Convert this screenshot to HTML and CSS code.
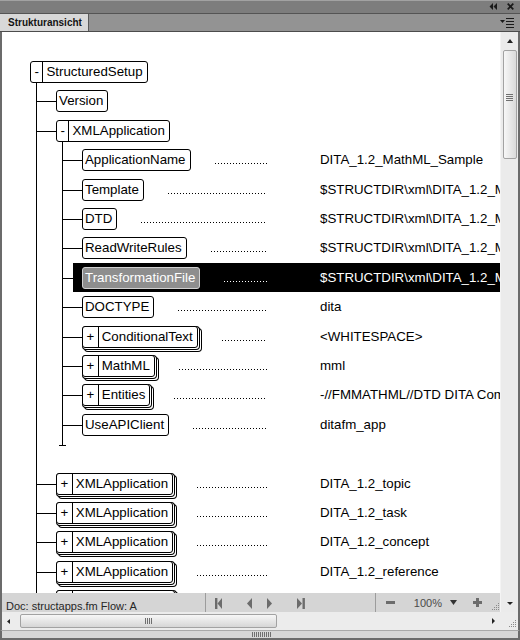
FILE: index.html
```html
<!DOCTYPE html>
<html>
<head>
<meta charset="utf-8">
<link rel="stylesheet" href="styles.css">
</head>
<body>
<div class="panel">
  <div class="titlebar">
    <svg class="collapse" width="8" height="7" viewBox="0 0 8 7"><path d="M4 0L0.5 3.5L4 7ZM8 0L4.5 3.5L8 7Z" fill="#1a1a1a"/></svg>
    <svg class="close" width="7" height="7" viewBox="0 0 7 7"><path d="M0.7 0.7L6.3 6.3M6.3 0.7L0.7 6.3" stroke="#1a1a1a" stroke-width="1.7"/></svg>
  </div>
  <div class="tabrow">
    <div class="tab">Strukturansicht</div>
    <svg class="menu" width="15" height="10" viewBox="0 0 15 10"><path d="M0 2H5L2.5 5Z" fill="#1a1a1a"/><rect x="6" y="0" width="8" height="1" fill="#1a1a1a"/><rect x="6" y="3" width="8" height="1" fill="#1a1a1a"/><rect x="6" y="6" width="8" height="1" fill="#1a1a1a"/><rect x="6" y="9" width="8" height="1" fill="#1a1a1a"/></svg>
  </div>
  <div class="frame">
    <div class="view">
      <div class="row"><span class="tree"><span class="node open"><span class="exp">-</span><span class="lbl">StructuredSetup</span></span></span></div>
      <div class="row"><span class="tree"><i class="c"></i><span class="node"><span class="lbl">Version</span></span></span></div>
      <div class="row"><span class="tree"><i class="c"></i><span class="node open"><span class="exp">-</span><span class="lbl">XMLApplication</span></span></span></div>
      <div class="row"><span class="tree"><i class="g"></i><i class="c"></i><span class="node"><span class="lbl">ApplicationName</span></span><i class="dots"></i></span><span class="val">DITA_1.2_MathML_Sample</span></div>
      <div class="row"><span class="tree"><i class="g"></i><i class="c"></i><span class="node"><span class="lbl">Template</span></span><i class="dots"></i></span><span class="val">$STRUCTDIR\xml\DITA_1.2_MathML\template.fm</span></div>
      <div class="row"><span class="tree"><i class="g"></i><i class="c"></i><span class="node"><span class="lbl">DTD</span></span><i class="dots"></i></span><span class="val">$STRUCTDIR\xml\DITA_1.2_MathML\ditabase.dtd</span></div>
      <div class="row"><span class="tree"><i class="g"></i><i class="c"></i><span class="node"><span class="lbl">ReadWriteRules</span></span><i class="dots"></i></span><span class="val">$STRUCTDIR\xml\DITA_1.2_MathML\rules.txt</span></div>
      <div class="row sel"><span class="tree"><i class="g"></i><i class="c"></i><span class="node"><span class="lbl">TransformationFile</span></span><i class="dots"></i></span><span class="val">$STRUCTDIR\xml\DITA_1.2_MathML\transform.xsl</span></div>
      <div class="row"><span class="tree"><i class="g"></i><i class="c"></i><span class="node"><span class="lbl">DOCTYPE</span></span><i class="dots"></i></span><span class="val">dita</span></div>
      <div class="row"><span class="tree"><i class="g"></i><i class="c"></i><span class="node stk"><span class="exp">+</span><span class="lbl">ConditionalText</span></span><i class="dots"></i></span><span class="val">&lt;WHITESPACE&gt;</span></div>
      <div class="row"><span class="tree"><i class="g"></i><i class="c"></i><span class="node stk"><span class="exp">+</span><span class="lbl">MathML</span></span><i class="dots"></i></span><span class="val">mml</span></div>
      <div class="row"><span class="tree"><i class="g"></i><i class="c"></i><span class="node stk"><span class="exp">+</span><span class="lbl">Entities</span></span><i class="dots"></i></span><span class="val">-//FMMATHML//DTD DITA Composite//EN</span></div>
      <div class="row"><span class="tree"><i class="g"></i><i class="c"></i><span class="node"><span class="lbl">UseAPIClient</span></span><i class="dots"></i></span><span class="val">ditafm_app</span></div>
      <div class="row"><span class="tree"><i class="g"></i><i class="end"></i></span></div>
      <div class="row"><span class="tree"><i class="c"></i><span class="node stk"><span class="exp">+</span><span class="lbl">XMLApplication</span></span><i class="dots"></i></span><span class="val">DITA_1.2_topic</span></div>
      <div class="row"><span class="tree"><i class="c"></i><span class="node stk"><span class="exp">+</span><span class="lbl">XMLApplication</span></span><i class="dots"></i></span><span class="val">DITA_1.2_task</span></div>
      <div class="row"><span class="tree"><i class="c"></i><span class="node stk"><span class="exp">+</span><span class="lbl">XMLApplication</span></span><i class="dots"></i></span><span class="val">DITA_1.2_concept</span></div>
      <div class="row"><span class="tree"><i class="c"></i><span class="node stk"><span class="exp">+</span><span class="lbl">XMLApplication</span></span><i class="dots"></i></span><span class="val">DITA_1.2_reference</span></div>
      <div class="row"><span class="tree"><i class="c"></i><span class="node stk"><span class="exp blank"></span><span class="lbl blank"></span></span></span></div>
    </div>
    <div class="vscroll">
      <svg class="up" width="6" height="4" viewBox="0 0 6 4"><path d="M3 0L6 4H0Z" fill="#222"/></svg>
      <div class="vthumb"><svg width="7" height="7" viewBox="0 0 7 7"><rect y="0" width="7" height="1" fill="#6f6f6f"/><rect y="2" width="7" height="1" fill="#6f6f6f"/><rect y="4" width="7" height="1" fill="#6f6f6f"/><rect y="6" width="7" height="1" fill="#6f6f6f"/></svg></div>
      <div class="flex1"></div>
      <svg class="down" width="6" height="3" viewBox="0 0 6 3"><path d="M0 0H6L3 3Z" fill="#222"/></svg>
    </div>
    <div class="status">
      <span class="doc">Doc: structapps.fm Flow: A</span>
      <span class="sep"></span>
      <svg class="nav" width="169" height="19" viewBox="0 0 169 19"><g fill="#6c6c6c"><rect x="9" y="5" width="2.4" height="11"/><path d="M11.5 10.5L16 5V16Z"/><path d="M41 10.5L46 5V16Z"/><path d="M66 10.5L61 5V16Z"/><path d="M96 10.5L91 5V16Z"/><rect x="96.5" y="5" width="2.4" height="11"/></g></svg>
      <span class="sep"></span>
      <span class="zoombox">
        <svg class="minus" width="9" height="3" viewBox="0 0 9 3"><rect width="9" height="3" fill="#6c6c6c"/></svg>
        <span class="pct">100%</span>
        <svg class="ztri" width="7" height="5" viewBox="0 0 7 5"><path d="M0 0H7L3.5 5Z" fill="#333"/></svg>
        <svg class="plus" width="9" height="9" viewBox="0 0 9 9"><rect x="3" y="0" width="3" height="9" fill="#6c6c6c"/><rect x="0" y="3" width="9" height="3" fill="#6c6c6c"/></svg>
        <svg class="rgrip" width="10" height="10" viewBox="0 0 10 10"><g fill="#8a8a8a"><rect x="8" y="2" width="1" height="1"/><rect x="6" y="4" width="1" height="1"/><rect x="8" y="4" width="1" height="1"/><rect x="4" y="6" width="1" height="1"/><rect x="6" y="6" width="1" height="1"/><rect x="8" y="6" width="1" height="1"/><rect x="2" y="8" width="1" height="1"/><rect x="4" y="8" width="1" height="1"/><rect x="6" y="8" width="1" height="1"/><rect x="8" y="8" width="1" height="1"/></g></svg>
      </span>
    </div>
    <div class="hbar">
      <svg class="left" width="3" height="5" viewBox="0 0 3 5"><path d="M0 2.5L3 0V5Z" fill="#222"/></svg>
      <div class="hthumb"><svg width="7" height="6" viewBox="0 0 7 6"><rect x="0" width="1" height="6" fill="#6f6f6f"/><rect x="2" width="1" height="6" fill="#6f6f6f"/><rect x="4" width="1" height="6" fill="#6f6f6f"/><rect x="6" width="1" height="6" fill="#6f6f6f"/></svg></div>
      <div class="flex1"></div>
      <svg class="right" width="3" height="6" viewBox="0 0 3 6"><path d="M3 3L0 0V6Z" fill="#222"/></svg>
    </div>
    <div class="corner">
      <svg width="10" height="10" viewBox="0 0 10 10"><g fill="#8a8a8a"><rect x="8" y="2" width="1" height="1"/><rect x="6" y="4" width="1" height="1"/><rect x="8" y="4" width="1" height="1"/><rect x="4" y="6" width="1" height="1"/><rect x="6" y="6" width="1" height="1"/><rect x="8" y="6" width="1" height="1"/><rect x="2" y="8" width="1" height="1"/><rect x="4" y="8" width="1" height="1"/><rect x="6" y="8" width="1" height="1"/><rect x="8" y="8" width="1" height="1"/></g></svg>
    </div>
  </div>
  <div class="bottom"><span class="bgrip"></span></div>
</div>
</body>
</html>
```

FILE: styles.css
```css
html, body {
  margin: 0;
  padding: 0;
}
body {
  width: 520px;
  height: 640px;
  overflow: hidden;
  background: #ffffff;
  font-family: "Liberation Sans", Arial, sans-serif;
}
.panel {
  width: 520px;
  height: 640px;
  display: flex;
  flex-direction: column;
}
.titlebar {
  height: 13px;
  flex: none;
  background: linear-gradient(#a2a2a2 0 1px, #7d7d7d 1px);
  border-bottom: 1px solid #545454;
  display: flex;
  justify-content: flex-end;
  align-items: center;
  gap: 10px;
  padding-right: 6px;
}
.tabrow {
  height: 17px;
  flex: none;
  background: #939393;
  border-bottom: 1px solid #4c4c4c;
  display: flex;
  align-items: center;
  justify-content: space-between;
  padding-right: 5px;
}
.tab {
  width: 80px;
  height: 17px;
  padding-left: 8px;
  background: #d8d8d8;
  border-right: 1px solid #5a5a5a;
  font-size: 10px;
  font-weight: bold;
  line-height: 18px;
  color: #141414;
}
.frame {
  flex: none;
  display: grid;
  grid-template-columns: 498px 18px;
  grid-template-rows: 561px 19px 18px;
  border-left: 2px solid #6b6b6b;
  border-right: 2px solid #6b6b6b;
}
.view {
  grid-row: 1;
  grid-column: 1;
  overflow: hidden;
  background: #ffffff;
  padding-top: 25px;
  box-sizing: border-box;
  font-size: 13.3px;
  color: #000;
}
.row {
  height: 29px;
  display: flex;
  align-items: flex-start;
  padding-left: 28px;
  white-space: nowrap;
}
.row:nth-child(5n+2), .row:nth-child(5n+4) {
  height: 30px;
}
.tree {
  width: 237px;
  flex: none;
  align-self: stretch;
  display: flex;
  align-items: flex-start;
}
.g, .c, .end {
  width: 26px;
  flex: none;
  align-self: stretch;
}
.g {
  background: linear-gradient(#000, #000) 6px 0 / 1px 100% no-repeat;
}
.c {
  background:
    linear-gradient(#000, #000) 6px 0 / 1px 100% no-repeat,
    linear-gradient(#000, #000) 6px 15px / 20px 1px no-repeat;
}
.end {
  background:
    linear-gradient(#000, #000) 6px 0 / 1px 7px no-repeat,
    linear-gradient(#000, #000) 3px 6px / 7px 1px no-repeat;
}
.node {
  position: relative;
  margin-top: 4px;
  height: 22px;
  box-sizing: border-box;
  display: flex;
  border: 1px solid #000;
  border-radius: 3px;
  background: #fff;
  line-height: 20px;
  flex: none;
}
.node.open::after {
  content: "";
  position: absolute;
  left: 5px;
  top: 100%;
  width: 1px;
  height: 9px;
  background: #000;
}
.node.stk {
  box-shadow:
    1px 1px 0 0 #fff,
    1px 1px 0 1px #000,
    3px 3px 0 0 #fff,
    3px 3px 0 1px #000;
}
.exp {
  padding: 0 3.5px;
  border-right: 1px solid #000;
}
.exp.blank {
  width: 7.8px;
}
.lbl {
  padding: 0 4px 0 2px;
}
.exp + .lbl {
  padding-left: 3px;
}
.lbl.blank {
  width: 94px;
}
.dots {
  flex: 1;
  height: 1px;
  margin: 18px 0 0 24px;
  background: repeating-linear-gradient(90deg, #000 0 1px, transparent 1px 3px);
}
.val {
  margin: 4px 0 0 53px;
  line-height: 22px;
}
.row.sel {
  background: linear-gradient(#000, #000) 71px 0 / 100% 100% no-repeat;
}
.sel .node {
  background: #8e8e8e;
  border-color: #d0d0d0;
  color: #fff;
}
.sel .dots {
  background: repeating-linear-gradient(90deg, #fff 0 1px, transparent 1px 3px);
}
.sel .val {
  color: #fff;
}
.vscroll {
  grid-row: 1 / 3;
  grid-column: 2;
  background: #ebebeb;
  border-left: 1px solid #f4f4f4;
  display: flex;
  flex-direction: column;
  align-items: center;
}
.up {
  margin-top: 7px;
  flex: none;
}
.vthumb {
  margin-top: 7px;
  width: 14px;
  height: 109px;
  box-sizing: border-box;
  padding-bottom: 14px;
  border: 1px solid #a2a2a2;
  border-radius: 2px;
  background: linear-gradient(90deg, #f7f7f7, #dadada);
  display: flex;
  align-items: center;
  justify-content: center;
  flex: none;
}
.flex1 {
  flex: 1;
}
.down {
  margin-bottom: 7px;
  flex: none;
}
.status {
  grid-row: 2;
  grid-column: 1;
  background: #d5d5d5;
  display: flex;
  align-items: stretch;
  font-size: 11px;
  color: #262626;
}
.doc {
  width: 200px;
  padding-left: 4px;
  padding-top: 2px;
  line-height: 22px;
  height: 17px;
  overflow: hidden;
}
.sep {
  width: 1px;
  background: #9c9c9c;
  flex: none;
}
.nav {
  flex: none;
}
.zoombox {
  flex: 1;
  display: flex;
  align-items: center;
}
.minus {
  margin-left: 10px;
}
.pct {
  margin-left: 19px;
  color: #4a4a4a;
  line-height: 19px;
  padding-top: 1px;
}
.ztri {
  margin-left: 8px;
}
.plus {
  margin-left: 16px;
}
.rgrip {
  margin-left: 8px;
  align-self: flex-end;
  margin-bottom: 1px;
}
.hbar {
  grid-row: 3;
  grid-column: 1;
  background: #ececec;
  display: flex;
  align-items: center;
}
.left {
  margin-left: 5px;
  flex: none;
}
.hthumb {
  margin-left: 10px;
  width: 257px;
  height: 14px;
  box-sizing: border-box;
  border: 1px solid #a2a2a2;
  border-radius: 2px;
  background: linear-gradient(#f7f7f7, #d6d6d6);
  display: flex;
  align-items: center;
  justify-content: center;
  flex: none;
}
.right {
  margin-right: 5px;
  flex: none;
}
.corner {
  grid-row: 3;
  grid-column: 2;
  background: #ececec;
  display: flex;
  align-items: flex-end;
  justify-content: flex-end;
  padding: 0 1px 2px 0;
}
.bottom {
  flex: none;
  height: 7px;
  background: #d6d6d6;
  border-top: 1px solid #a8a8a8;
  border-bottom: 2px solid #6b6b6b;
  border-left: 2px solid #6b6b6b;
  border-right: 2px solid #6b6b6b;
  display: flex;
  justify-content: center;
  align-items: center;
}
.bgrip {
  width: 19px;
  height: 5px;
  margin-left: 2px;
  background: repeating-linear-gradient(90deg, #6f6f6f 0 1px, transparent 1px 2px);
}
```
